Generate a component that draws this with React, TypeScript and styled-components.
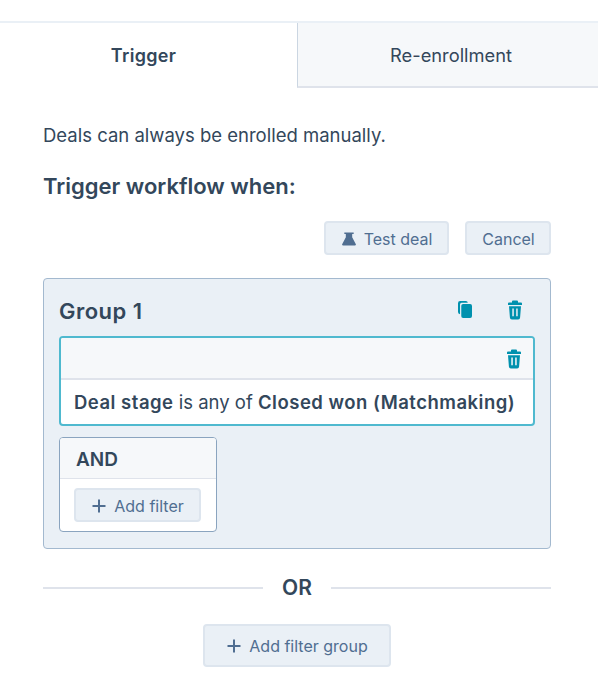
import React from 'react';
import styled, { createGlobalStyle } from 'styled-components';

const GlobalStyle = createGlobalStyle`
  html, body {
    margin: 0;
    padding: 0;
    background: #fff;
    overflow: hidden;
  }
  body {
    font-family: "Inter", "Liberation Sans", sans-serif;
    color: #33475b;
  }
`;

const Page = styled.div`
  width: 598px;
  height: 673px;
  padding-top: 21px;
  box-sizing: border-box;
`;

const Tabs = styled.div`
  display: flex;
  height: 67px;
  border-top: 2px solid #eaf0f6;
  box-sizing: border-box;
`;

const Tab = styled.div<{ $active?: boolean }>`
  display: flex;
  align-items: center;
  justify-content: center;
  box-sizing: border-box;
  font-size: ${({ $active }) => ($active ? '18px' : '18.3px')};
  letter-spacing: ${({ $active }) => ($active ? '0.3px' : '0')};
  font-weight: ${({ $active }) => ($active ? 600 : 400)};
  width: ${({ $active }) => ($active ? '297px' : '301px')};
  padding: ${({ $active }) => ($active ? '0 10px 0 0' : '0 0 0 6px')};
  background: ${({ $active }) => ($active ? '#fff' : '#f6f8fa')};
  border-left: ${({ $active }) => ($active ? 'none' : '1.5px solid #cbd6e2')};
  border-bottom: ${({ $active }) => ($active ? 'none' : '2px solid #dfe3eb')};
`;

const Body = styled.div`
  display: flex;
  flex-direction: column;
  padding: 35px 47px 0 43px;
`;

const Note = styled.p`
  margin: 0;
  font-size: 18.5px;
  line-height: 24px;
  white-space: nowrap;
`;

const Heading = styled.h2`
  margin: 25px 0 0;
  font-size: 22px;
  line-height: 28px;
  font-weight: 600;
`;

const Actions = styled.div`
  display: flex;
  justify-content: flex-end;
  gap: 16px;
  margin-top: 21px;
`;

const Button = styled.button<{ $width: number; $height?: number }>`
  display: flex;
  align-items: center;
  justify-content: center;
  gap: 8px;
  width: ${({ $width }) => $width}px;
  height: ${({ $height }) => $height ?? 34}px;
  padding: 1px 0 0 1px;
  box-sizing: border-box;
  background: #eaf0f6;
  border: 2px solid #dde5ee;
  border-radius: 4px;
  color: #506e91;
  font-family: inherit;
  font-size: 16px;
  font-weight: 400;
`;

const Group = styled.section`
  margin-top: 23px;
  height: 271px;
  box-sizing: border-box;
  padding: 0 15px;
  background: #eaf0f6;
  border: 1.5px solid #a3b9cf;
  border-radius: 4px;
`;

const GroupHeader = styled.div`
  display: flex;
  align-items: center;
  height: 57px;
`;

const GroupTitle = styled.h3`
  flex: 1;
  margin: 0;
  padding-top: 6px;
  font-size: 22px;
  letter-spacing: 0.5px;
  font-weight: 600;
`;

const GroupIcons = styled.div`
  display: flex;
  align-items: center;
  gap: 36px;
  padding-right: 13px;
  padding-top: 4px;
`;

const FilterCard = styled.div`
  background: #fff;
  border: 2px solid #4fb9cf;
  border-radius: 4px;
  overflow: hidden;
`;

const FilterTop = styled.div`
  display: flex;
  align-items: center;
  justify-content: flex-end;
  height: 42px;
  padding: 2px 12px 0 0;
  box-sizing: border-box;
  background: #f6f8fa;
  border-bottom: 2px solid #dfe3eb;
`;

const FilterText = styled.div`
  padding: 0 13px;
  height: 44px;
  display: flex;
  align-items: center;
  font-size: 18.5px;
  white-space: pre;
  b {
    font-weight: 600;
    letter-spacing: 0.5px;
  }
`;

const AndCard = styled.div`
  margin-top: 11px;
  width: 158px;
  box-sizing: border-box;
  background: #fff;
  border: 1.5px solid #8aa4bf;
  border-radius: 4px;
  overflow: hidden;
`;

const AndHeader = styled.div`
  display: flex;
  align-items: center;
  height: 41px;
  padding: 3px 0 0 16px;
  box-sizing: border-box;
  background: #f6f8fa;
  border-bottom: 1.5px solid #dfe3eb;
  font-size: 19px;
  font-weight: 600;
`;

const AndBody = styled.div`
  padding: 9px 14px 9px;
`;

const Divider = styled.div`
  display: flex;
  align-items: center;
  gap: 19px;
  margin-top: 27px;
  font-size: 21px;
  font-weight: 600;
  line-height: 24px;
  &::before,
  &::after {
    content: '';
    flex: 1;
    height: 2px;
    background: #dfe3eb;
  }
`;

const Centered = styled.div`
  display: flex;
  justify-content: center;
  margin-top: 24px;
`;

const TrashIcon = () => (
  <svg width="14" height="20" viewBox="0 0 14 20" fill="#0091ae">
    <path d="M5 0.500h4a1 1 0 0 1 1 1V2.600h3a1 1 0 0 1 1 1V5H0V3.600a1 1 0 0 1 1-1h3V1.500a1 1 0 0 1 1-1z" />
    <path
      fillRule="evenodd"
      d="M1 6.300h12l-.9 11.200a2 2 0 0 1-2 1.900H3.900a2 2 0 0 1-2-1.900zM4.300 8.500v7.800h1.500V8.500zm3.900 0v7.800h1.500V8.500z"
    />
  </svg>
);

const CopyIcon = () => (
  <svg width="14" height="19" viewBox="0 0 15 19" fill="#0091ae">
    <rect x="3.500" y="3.500" width="11.500" height="15" rx="2" />
    <path d="M2.200 14.500A2.200 2.200 0 0 1 0 12.300V2.700A2.200 2.200 0 0 1 2.200 .500H8.500A2 2 0 0 1 10.500 2.300H3.800A1.800 1.800 0 0 0 2.200 4z" />
  </svg>
);

const FlaskIcon = () => (
  <svg width="14" height="14" viewBox="0 0 15 14" fill="#506e91">
    <path d="M2.500 0h10v1.700h-1.600v3.300L14.700 12.300a1.200 1.200 0 0 1-1.100 1.700H1.400a1.200 1.200 0 0 1-1.100-1.700L4.100 5V1.700H2.500z" />
  </svg>
);

const PlusIcon = () => (
  <svg width="14" height="14" viewBox="0 0 14 14" fill="none" stroke="#506e91" strokeWidth="2">
    <path d="M7 0.500v13M0.500 7h13" />
  </svg>
);

export default function App() {
  return (
    <>
      <GlobalStyle />
      <Page>
        <Tabs>
          <Tab $active>Trigger</Tab>
          <Tab>Re-enrollment</Tab>
        </Tabs>
        <Body>
          <Note>Deals can always be enrolled manually.</Note>
          <Heading>Trigger workflow when:</Heading>
          <Actions>
            <Button $width={125}>
              <FlaskIcon />
              Test deal
            </Button>
            <Button $width={86}>Cancel</Button>
          </Actions>
          <Group>
            <GroupHeader>
              <GroupTitle>Group 1</GroupTitle>
              <GroupIcons>
                <CopyIcon />
                <TrashIcon />
              </GroupIcons>
            </GroupHeader>
            <FilterCard>
              <FilterTop>
                <TrashIcon />
              </FilterTop>
              <FilterText>
                <b>Deal stage</b> is any of <b>Closed won (Matchmaking)</b>
              </FilterText>
            </FilterCard>
            <AndCard>
              <AndHeader>AND</AndHeader>
              <AndBody>
                <Button $width={127}>
                  <PlusIcon />
                  Add filter
                </Button>
              </AndBody>
            </AndCard>
          </Group>
          <Divider>OR</Divider>
          <Centered>
            <Button $width={188} $height={43}>
              <PlusIcon />
              Add filter group
            </Button>
          </Centered>
        </Body>
      </Page>
    </>
  );
}
